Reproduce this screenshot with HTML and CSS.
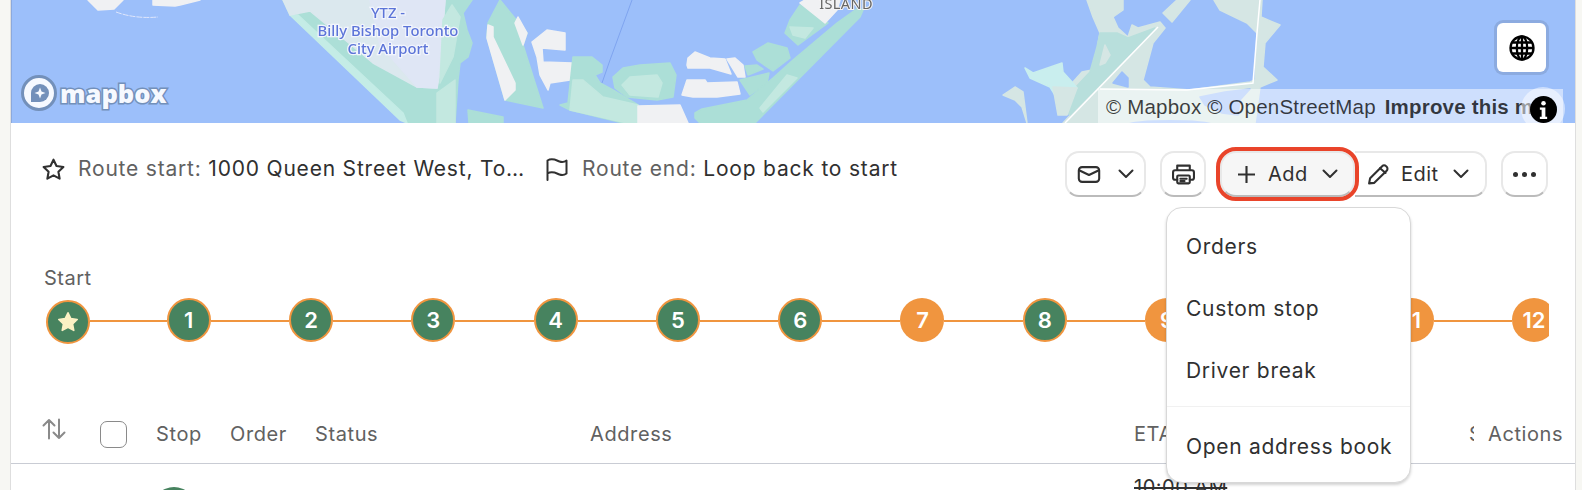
FILE: index.html
```html
<!DOCTYPE html>
<html lang="en">
<head>
<meta charset="utf-8">
<title>Route</title>
<link rel="stylesheet" href="styles.css">
</head>
<body>
<main class="card">
  <section class="map">
    <svg class="map-art" viewBox="11 0 1564 123" aria-hidden="true">
      <polygon class="land" points="88,0 98,10 114,9 118,5 123,0"/>
      <polygon class="land" points="153,0 153,5 175,6 180,5 200,0"/>
      <path class="shore" d="M116 12Q135 19 158 17"/>
      <polygon class="park" points="283,0 290,15 298,18 407,123 455,123 458,80 460,63 468,57 472,43 467,30 463,13 472,0"/>
      <polygon class="strip" points="290,15 298,15 403,113 407,123 400,120"/>
      <polygon class="apron" points="283,0 290,15 310,11 373,63 417,87 437,88 440,73 445,0"/>
      <polygon class="airfield" points="370,0 445,0 437,88 417,87 380,45"/>
      <polygon class="meadow" points="437,93 455,80 455,123 437,123"/>
      <polygon class="meadow" points="443,20 452,5 460,17 453,57 440,83"/>
      <polygon class="park" points="500,0 527,33 523,45 543,108 505,100 487,37 488,23"/>
      <polygon class="land" points="488,25 493,27 493,37 515,83 515,90 505,100 487,38"/>
      <polygon class="land" points="515,23 518,17 527,33 523,45"/>
      <polygon class="park" points="468,110 503,117 503,123 469,123"/>
      <polygon class="land" points="532,42 547,30 565,33 565,50 542,48 543,62 572,63 570,80 550,83 548,90 540,75 537,57"/>
      <polygon class="park" points="573,57 592,57 602,65 602,72 595,75 600,83 613,90 638,105 638,123 623,123 570,110 560,105 568,103"/>
      <polygon class="meadow" points="573,80 583,80 603,97 638,105 638,123 627,123 570,110"/>
      <polygon class="land" points="638,106 680,105 688,123 638,123"/>
      <path class="channel" d="M632 0L610 60L602 83"/>
      <polygon class="park" points="613,77 623,68 640,65 670,63 676,75 673,97 657,100 627,97 615,88"/>
      <polygon class="meadow" points="622,85 630,77 657,75 662,83 658,97 630,95"/>
      <polygon class="land" points="687,65 688,58 695,52 710,58 725,59 731,74 710,68 688,68"/>
      <polygon class="land" points="727,59 735,58 743,65 745,77 738,77"/>
      <polygon class="land" points="682,95 687,80 705,80 707,83 737,82 740,94 717,97 693,97"/>
      <polygon class="park" points="745,66 757,65 763,69 748,75"/>
      <polygon class="park" points="740,80 769,73 767,83 750,95"/>
      <polygon class="park" points="753,52 768,43 787,48 790,58 773,71 757,60"/>
      <polygon class="park" points="695,113 702,109 747,100 773,78 793,60 837,23 858,8 863,10 860,17 755,123 700,123 695,118"/>
      <polygon class="meadow" points="787,75 797,78 763,112 760,108"/>
      <polygon class="park" points="800,5 828,23 798,45 785,33 790,20"/>
      <polygon class="meadow" points="790,27 813,28 805,38 793,35"/>
      <polygon class="land" points="800,3 805,0 840,0 837,10 825,23"/>
      <text class="label-island" x="846" y="9" text-anchor="middle">ISLAND</text>
      <polygon class="pale" points="1087,0 1123,0 1123,10 1113,17 1118,28 1128,37 1132,25 1138,28 1160,22 1165,28 1153,43 1143,80 1150,87 1190,90 1250,82 1255,80 1257,33 1247,23 1220,10 1214,0 1262,0 1261,17 1280,25 1265,43 1263,67 1277,80 1260,87 1255,123 1063,123 1075,110 1080,100 1078,88 1073,82 1082,72 1092,70 1097,50 1100,33 1093,17"/>
      <polygon class="teal" points="1097,47 1100,33 1117,33 1128,38 1155,28 1070,115 1063,110 1075,88 1090,72"/>
      <polygon class="pale" points="1100,65 1105,45 1110,55 1105,63"/>
      <polygon class="water" points="1200,97 1225,92 1250,89 1240,100 1238,115 1222,113 1205,105"/>
      <polygon class="water" points="1113,83 1122,72 1128,78 1128,87"/>
      <ellipse class="water" cx="1170" cy="124" rx="42" ry="4"/>
      <polygon class="pale" points="1163,13 1177,0 1190,0 1172,22"/>
      <polygon class="cyan" points="1025,68 1033,73 1062,63 1063,72 1073,83 1077,88 1058,100 1050,87 1030,78"/>
      <polygon class="pale" points="1053,87 1077,88 1067,115 1058,115"/>
      <polygon class="pale" points="1003,95 1015,87 1023,92 1027,123 1022,107 1015,100"/>
      <path class="road" d="M1158 27L1065 123"/>
      <path class="road" d="M1100 89L1187 90L1253 83L1257 33L1260 0"/>
      <text class="label-airport" x="388" y="18" text-anchor="middle">YTZ -</text>
      <text class="label-airport" x="388" y="36" text-anchor="middle">Billy Bishop Toronto</text>
      <text class="label-airport" x="388" y="54" text-anchor="middle">City Airport</text>
    </svg>
    <div class="logo">
      <svg class="logo-mark" viewBox="0 0 36 36" aria-hidden="true">
        <circle class="logo-disc" cx="18" cy="18" r="16.5"/>
        <path class="logo-pin" d="M10 27V18a9 9 0 1 1 9 9Z"/>
        <path class="logo-spark" d="M19 12.5l1.5 4 4 1.5-4 1.5-1.5 4-1.5-4-4-1.5 4-1.5Z"/>
      </svg>
      <span class="logo-word">mapbox</span>
    </div>
    <button class="globe" aria-label="Globe">
      <svg viewBox="0 0 26 26" aria-hidden="true">
        <circle cx="13" cy="13" r="11.5"/>
        <ellipse cx="13" cy="13" rx="5.2" ry="11.5"/>
        <path d="M13 1.5v23M1.5 13h23M3.2 7.5h19.6M3.2 18.5h19.6"/>
      </svg>
    </button>
    <div class="attrib">© Mapbox © OpenStreetMap <b>Improve this map</b></div>
    <div class="info-halo">
      <svg viewBox="0 0 26 26" aria-hidden="true">
        <circle class="info-disc" cx="13" cy="13" r="13"/>
        <circle class="info-mark" cx="13" cy="7" r="2.2"/>
        <path class="info-mark" d="M9.5 11h5.3v9h1.7v2.2h-7V20h1.7v-6.8H9.5Z"/>
      </svg>
    </div>
  </section>

  <section class="toolbar">
    <div class="route-info">
      <svg class="ico ico-star" viewBox="0 0 24 24" aria-hidden="true"><path d="M12 2.6l2.9 6.1 6.6.9-4.8 4.6 1.2 6.6-5.9-3.2-5.9 3.2 1.2-6.6-4.8-4.6 6.6-.9Z"/></svg>
      <span class="route-item route-start"><span class="muted">Route start:</span> 1000 Queen Street West, Toronto</span>
      <svg class="ico ico-flag" viewBox="0 0 24 24" aria-hidden="true"><path d="M2.5 23V3.500c5-3 9 0 12 1 3 1 5 .5 7-1v13c-2 1.500-4 2-7 1-3-1-7-4-12-1"/></svg>
      <span class="route-item"><span class="muted">Route end:</span> Loop back to start</span>
    </div>
    <div class="actions">
      <button class="btn btn-mail">
        <svg class="ico ico-mail" viewBox="0 0 24 18" aria-hidden="true"><rect x="1.200" y="1.200" width="21.600" height="15.600" rx="3.500"/><path d="M1.500 4.500l10.500 5 10.500-5"/></svg>
        <svg class="ico chev" viewBox="0 0 16 10" aria-hidden="true"><path d="M1.500 1.500l6.500 6.500 6.500-6.500"/></svg>
      </button>
      <button class="btn btn-print">
        <svg class="ico ico-print" viewBox="0 0 22 20" aria-hidden="true"><path d="M5 6V1.500h12V6M5 15H3a2 2 0 0 1-2-2V8a2 2 0 0 1 2-2h16a2 2 0 0 1 2 2v5a2 2 0 0 1-2 2h-2"/><rect x="5" y="11" width="12" height="7.500" rx="1"/><path d="M8 14h6M8 16.300h4"/></svg>
      </button>
      <div class="btn-group">
        <button class="btn btn-add">
          <svg class="ico ico-plus" viewBox="0 0 16 16" aria-hidden="true"><path d="M8 0.500v15M0.500 8h15"/></svg>
          <span>Add</span>
          <svg class="ico chev" viewBox="0 0 16 10" aria-hidden="true"><path d="M1.500 1.500l6.500 6.500 6.500-6.500"/></svg>
        </button>
        <button class="btn btn-edit">
          <svg class="ico ico-pencil" viewBox="0 0 22 20" aria-hidden="true"><path d="M2 18.500l1-5L14.500 2a2.600 2.600 0 0 1 3.700 0l.6.600a2.600 2.600 0 0 1 0 3.700L7 18Z"/><path d="M12.500 4l5.300 4.500"/></svg>
          <span>Edit</span>
          <svg class="ico chev" viewBox="0 0 16 10" aria-hidden="true"><path d="M1.500 1.500l6.500 6.500 6.500-6.500"/></svg>
        </button>
      </div>
      <button class="btn btn-more" aria-label="More">
        <span class="dot"></span><span class="dot"></span><span class="dot"></span>
      </button>
    </div>
  </section>

  <section class="stepper">
    <div class="start-label">Start</div>
    <div class="track">
      <span class="node node-start"><svg viewBox="0 0 24 24" aria-hidden="true"><path d="M12 3.500l2.600 5.400 5.900.8-4.300 4.100 1.100 5.900-5.300-2.800-5.300 2.800 1.100-5.900-4.300-4.100 5.900-.8Z"/></svg></span>
      <i class="link link-first"></i><span class="node green">1</span>
      <i class="link"></i><span class="node green">2</span>
      <i class="link"></i><span class="node green">3</span>
      <i class="link"></i><span class="node green">4</span>
      <i class="link"></i><span class="node green">5</span>
      <i class="link"></i><span class="node green">6</span>
      <i class="link"></i><span class="node orange">7</span>
      <i class="link"></i><span class="node green">8</span>
      <i class="link"></i><span class="node orange">9</span>
      <i class="link"></i><span class="node orange">10</span>
      <i class="link"></i><span class="node orange">11</span>
      <i class="link"></i><span class="node orange">12</span>
    </div>
  </section>

  <section class="table">
    <div class="row row-head">
      <svg class="ico ico-sort" viewBox="0 0 24 24" aria-hidden="true"><path d="M7 21.500V3M1.500 8.500L7 3l5.500 5.500M17 2.500V21M11.500 15.500L17 21l5.500-5.500"/></svg>
      <span class="checkbox"></span>
      <span>Stop</span>
      <span>Order</span>
      <span>Status</span>
      <span>Address</span>
      <span>ETA</span>
      <span class="clipped">Service</span>
      <span>Actions</span>
    </div>
    <div class="row row-body">
      <span></span>
      <span></span>
      <span class="stop-badge"></span>
      <span></span>
      <span></span>
      <span></span>
      <span class="eta">10:00 AM</span>
    </div>
  </section>

  <div class="menu">
    <div class="menu-group">
      <div class="menu-item">Orders</div>
      <div class="menu-item">Custom stop</div>
      <div class="menu-item">Driver break</div>
    </div>
    <div class="menu-group menu-last">
      <div class="menu-item">Open address book</div>
    </div>
  </div>
</main>
</body>
</html>
```
FILE: styles.css
```css
* { box-sizing: border-box; }
html, body { margin: 0; height: 490px; overflow: hidden; }
body {
  background: #f7f7f3;
  font-family: Inter, "Liberation Sans", sans-serif;
  font-size: 20px;
  letter-spacing: 0.5px;
  color: #303030;
}
button { font: inherit; letter-spacing: inherit; color: inherit; }

.card {
  position: relative;
  margin-left: 10px;
  width: 1566px;
  height: 490px;
  overflow: hidden;
  background: #fff;
  border-left: 1px solid #dedede;
  border-right: 1px solid #dedede;
}

/* map */
.map {
  position: relative;
  height: 123px;
  overflow: hidden;
  background: #9cbffa;
  box-shadow: inset 1px 0 0 #8ba9dd;
}
.map-art { display: block; width: 100%; height: 123px; filter: blur(0.4px); }
.map-art polygon { fill: var(--tone); stroke: var(--tone); stroke-width: 1.500; stroke-linejoin: round; }
.water { --tone: #9cbffa; fill: #9cbffa; }
.land { --tone: #f0f1f3; }
.park { --tone: #acdfd7; }
.meadow { --tone: #c3e8e0; }
.strip { --tone: #c4ece6; }
.apron { --tone: #dbe8ee; }
.airfield { --tone: #dfe6f5; }
.pale { --tone: #d5e6e4; }
.teal { --tone: #b8dfdc; }
.cyan { --tone: #c9eeee; }
.road { fill: none; stroke: #fff; stroke-width: 1.5; }
.channel { fill: none; stroke: #7fa4ef; stroke-width: 1; }
.shore { fill: none; stroke: #dfe6fb; stroke-width: 1; stroke-dasharray: 6 1; }
.label-airport {
  font-family: "Noto Sans", sans-serif;
  font-size: 14.800px;
  font-weight: 500;
  letter-spacing: 0;
  fill: #5c74d8;
  stroke: #f2f5fd;
  stroke-width: 2.500px;
  paint-order: stroke;
}
.label-island {
  font-family: "Noto Sans", sans-serif;
  font-size: 14.500px;
  letter-spacing: 0.4px;
  fill: #666;
  stroke: #f4f4f6;
  stroke-width: 2px;
  paint-order: stroke;
}
.logo {
  position: absolute;
  left: 10px;
  top: 75px;
  display: flex;
  align-items: center;
}
.logo-mark { width: 36px; height: 36px; }
.logo-disc { fill: #f6f9ff; stroke: #7390ba; stroke-width: 3; }
.logo-pin { fill: #7390ba; }
.logo-spark { fill: #f6f9ff; }
.logo-word {
  margin-left: 3px;
  font-family: "Open Sans", sans-serif;
  font-size: 25.500px;
  font-weight: 800;
  line-height: 30px;
  letter-spacing: 0;
  color: #f6f9ff;
  -webkit-text-stroke: 3px #7390ba;
  paint-order: stroke fill;
}
.globe {
  position: absolute;
  left: 1486px;
  top: 23px;
  width: 49px;
  height: 49px;
  padding: 0;
  display: flex;
  align-items: center;
  justify-content: center;
  background: #fff;
  border: 0;
  border-radius: 6px;
  box-shadow: 0 0 0 3px rgba(0, 0, 0, 0.1);
}
.globe svg { width: 26px; height: 26px; fill: none; stroke: #000; stroke-width: 2.300; }
.attrib {
  position: absolute;
  left: 1087px;
  top: 89px;
  width: 465px;
  height: 34px;
  padding: 6px 0 0 8px;
  overflow: hidden;
  white-space: nowrap;
  background: rgba(255, 255, 255, 0.5);
  font-family: "Liberation Sans", sans-serif;
  font-size: 20.500px;
  line-height: 24px;
  letter-spacing: 0.2px;
  color: rgba(0, 0, 0, 0.75);
}
.attrib b { margin-left: 3px; }
.info-halo {
  position: absolute;
  left: 1510px;
  top: 87px;
  width: 44px;
  height: 44px;
  border-radius: 50%;
  display: flex;
  align-items: center;
  justify-content: center;
  background: rgba(255, 255, 255, 0.5);
}
.info-halo svg { width: 27px; height: 27px; }
.info-disc { fill: #000; }
.info-mark { fill: #fff; }

/* toolbar */
.toolbar {
  display: flex;
  justify-content: space-between;
  height: 75px;
  padding: 28px 27px 0 30px;
}
.ico { display: block; flex: none; fill: none; stroke: #303030; stroke-width: 2; stroke-linejoin: round; stroke-linecap: round; }
.route-info {
  display: flex;
  align-items: center;
  height: 36px;
  white-space: nowrap;
  font-size: 21px;
  letter-spacing: 0.8px;
}
.muted { color: #616161; }
.route-item { display: block; line-height: 34px; }
.route-start {
  width: 452px;
  overflow: hidden;
  text-overflow: ellipsis;
}
.ico-star { width: 25px; height: 25px; margin-right: 12px; }
.ico-flag { width: 24px; height: 24px; margin: 0 13px 0 15px; }

.actions { display: flex; align-items: center; height: 46px; }
.btn {
  display: flex;
  align-items: center;
  height: 46px;
  padding: 0;
  background: #fff;
  border: 2px solid #e8e8e8;
  border-bottom-color: #bbb;
  border-radius: 14px;
}
.btn-mail { width: 81px; padding-left: 10px; }
.ico-mail { width: 24px; height: 17px; stroke-width: 2.200; }
.chev { width: 16px; height: 10px; }
.btn-mail .chev { margin-left: 17px; }
.btn-print { width: 46px; margin-left: 14px; justify-content: center; }
.ico-print { width: 23px; height: 21px; }
.btn-group { display: flex; margin-left: 14px; }
.btn-add {
  position: relative;
  z-index: 1;
  width: 135px;
  padding-left: 16px;
  background: #f6f6f6;
  outline: 4px solid #e9442a;
  outline-offset: 0;
  border-radius: 16px;
}
.ico-plus { width: 17px; height: 17px; }
.btn-add span { margin-left: 13px; }
.btn-add .chev { margin-left: 14px; }
.btn-edit { width: 132px; padding-left: 12px; border-radius: 0 14px 14px 0; border-left: 0; }
.ico-pencil { width: 23px; height: 21px; }
.btn-edit span { margin-left: 11px; }
.btn-edit .chev { margin-left: 14px; }
.btn-more { width: 47px; margin-left: 14px; justify-content: center; gap: 4px; }
.dot { width: 5px; height: 5px; border-radius: 50%; background: #303030; }

/* stepper */
.stepper { padding: 68px 0 0 35px; width: 1538px; }
.start-label { margin-left: -2px; line-height: 24px; height: 33px; color: #616161; }
.track { display: flex; align-items: flex-start; height: 50px; margin-top: -1px; overflow: hidden; }
.node {
  flex: none;
  width: 44px;
  height: 44px;
  display: flex;
  align-items: center;
  justify-content: center;
  border-radius: 50%;
  color: #fff;
  font-size: 22px;
  font-weight: 600;
  letter-spacing: 0;
}
.green { background: #47835f; border: 2px solid #f0953f; }
.orange { background: #f0953f; }
.node-start { margin-top: 2px; background: #47835f; border: 2px solid #f0953f; }
.node-start svg { width: 26px; height: 26px; fill: #fbf1c4; stroke: #fbf1c4; stroke-width: 1.500; stroke-linejoin: round; }
.link { flex: none; width: 78.300px; height: 2px; margin-top: 22px; background: #f0953f; }
.link-first { width: 76.700px; }

/* table */
.table { margin-top: 60px; }
.row {
  display: grid;
  grid-template-columns: 58px 56px 74px 85px 275px 544px 335px 19px 1fr;
  padding-left: 31px;
  white-space: nowrap;
}
.row-head {
  height: 56px;
  align-items: center;
  padding-bottom: 3px;
  border-bottom: 1px solid #c9ccd4;
  color: #616161;
  letter-spacing: 0.6px;
}
.ico-sort { width: 24px; height: 24px; stroke: #8a8a8a; margin-top: -10px; }
.checkbox { width: 27px; height: 27px; border: 1.500px solid #8a8a8a; border-radius: 7px; background: #fff; }
.clipped { display: block; width: 5px; overflow: hidden; }
.row-body { height: 26px; }
.stop-badge { width: 44px; height: 44px; margin: 23px 0 0 -4px; border-radius: 50%; background: #47835f; }
.eta { margin-top: 11px; line-height: 24px; text-decoration: line-through; }

/* add menu */
.menu {
  position: absolute;
  left: 1155px;
  top: 207px;
  width: 245px;
  height: 276px;
  background: #fff;
  border: 1px solid #d8d8d8;
  border-radius: 16px;
  box-shadow: 0 2px 3px rgba(0, 0, 0, 0.18);
  z-index: 2;
  font-size: 21px;
  letter-spacing: 0.7px;
}
.menu-group { padding: 8px 0 5px; height: 199px; border-bottom: 1px solid #f1f1f1; }
.menu-last { height: auto; padding: 18px 0 0; border-bottom: 0; }
.menu-item { padding-left: 19px; height: 62px; line-height: 62px; white-space: nowrap; }
.menu-last .menu-item { height: 44px; line-height: 44px; }
```
